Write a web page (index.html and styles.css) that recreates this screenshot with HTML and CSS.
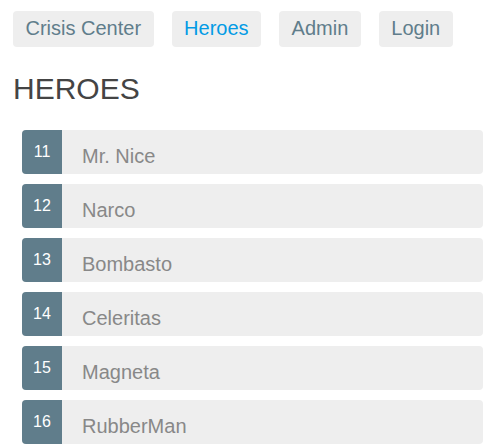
FILE: index.html
```html
<!DOCTYPE html>
<html lang="en">
<head>
<meta charset="UTF-8">
<meta name="viewport" content="width=device-width, initial-scale=1.0">
<title>Tour of Heroes</title>
<link rel="stylesheet" href="styles.css">
</head>
<body>
  <nav class="nav">
    <a href="#" class="nav-link">Crisis Center</a>
    <a href="#" class="nav-link active">Heroes</a>
    <a href="#" class="nav-link">Admin</a>
    <a href="#" class="nav-link">Login</a>
  </nav>
  <h2 class="title">HEROES</h2>
  <ul class="heroes">
    <li><span class="badge">11</span><span class="name">Mr. Nice</span></li>
    <li><span class="badge">12</span><span class="name">Narco</span></li>
    <li><span class="badge">13</span><span class="name">Bombasto</span></li>
    <li><span class="badge">14</span><span class="name">Celeritas</span></li>
    <li><span class="badge">15</span><span class="name">Magneta</span></li>
    <li><span class="badge">16</span><span class="name">RubberMan</span></li>
  </ul>
</body>
</html>
```

FILE: styles.css
```css
  body {
    margin: 0;
    padding: 11px 13px;
    font-family: "Liberation Sans", Arial, sans-serif;
    background-color: #fff;
  }
  .nav {
    display: flex;
    gap: 18px;
  }
  .nav-link {
    display: block;
    padding: 6px 12.5px 7px;
    font-size: 20px;
    line-height: 23px;
    color: #607d8b;
    background-color: #eee;
    border-radius: 4px;
    text-decoration: none;
  }
  .nav-link.active {
    color: #039be5;
  }
  .title {
    margin: 25px 0 0;
    font-size: 30px;
    line-height: 34px;
    font-weight: normal;
    color: #444;
  }
  .heroes {
    list-style-type: none;
    margin: 24px 0 0 9px;
    padding: 0;
    width: 461px;
    display: flex;
    flex-direction: column;
    gap: 10px;
  }
  .heroes li {
    display: flex;
    align-items: flex-start;
    height: 44px;
    background-color: #eee;
    border-radius: 4px;
    overflow: hidden;
  }
  .badge {
    box-sizing: border-box;
    width: 40px;
    height: 44px;
    padding-top: 14px;
    font-size: 16px;
    line-height: 16px;
    text-align: center;
    color: #fff;
    background-color: #607d8b;
  }
  .name {
    padding: 15px 0 0 20px;
    font-size: 20px;
    line-height: 23px;
    color: #888;
  }
```
